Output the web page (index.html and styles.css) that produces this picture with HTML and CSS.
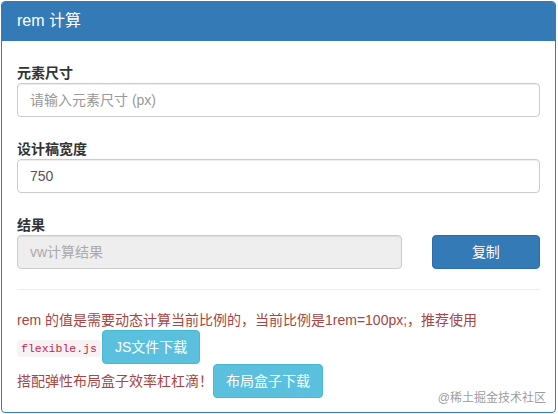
FILE: index.html
```html
<!DOCTYPE html>
<html lang="zh-CN">
<head>
<meta charset="utf-8">
<title>rem 计算</title>
<link rel="stylesheet" href="styles.css">
</head>
<body>
<div class="panel">
  <div class="panel-heading">
    <h3 class="panel-title">rem 计算</h3>
  </div>
  <div class="panel-body">
    <div class="form-group">
      <label class="label">元素尺寸</label>
      <input class="form-control" type="text" placeholder="请输入元素尺寸 (px)">
    </div>
    <div class="form-group">
      <label class="label">设计稿宽度</label>
      <input class="form-control" type="text" value="750">
    </div>
    <div class="form-group last">
      <label class="label">结果</label>
      <div class="row">
        <div class="col col-main">
          <input class="form-control" type="text" placeholder="vw计算结果" disabled>
        </div>
        <div class="col col-side">
          <button class="btn btn-primary btn-block" type="button">复制</button>
        </div>
      </div>
    </div>
    <hr class="divider">
    <p class="text-danger">rem 的值是需要动态计算当前比例的，当前比例是1rem=100px;，推荐使用<br><code class="code">flexible.js</code><a class="btn btn-info">JS文件下载</a><br>搭配弹性布局盒子效率杠杠滴！<a class="btn btn-info">布局盒子下载</a></p>
  </div>
</div>
<div class="watermark">@稀土掘金技术社区</div>
</body>
</html>
```

FILE: styles.css
```css
* {
  box-sizing: border-box;
}

html, body {
  margin: 0;
  padding: 0;
  background: #fff;
}

body {
  font-family: "Liberation Sans", Arial, "Noto Sans CJK SC", sans-serif;
  font-size: 14px;
  line-height: 20px;
  color: #333;
  width: 558px;
  height: 414px;
  position: relative;
  overflow: hidden;
}

.panel {
  margin: 1px 2px 0 1px;
  border: 1px solid #337ab7;
  border-radius: 4px;
  background: #fff;
  overflow: hidden;
}

.panel-heading {
  background: #337ab7;
  color: #fff;
  padding: 10px 15px;
  border-bottom: 1px solid #337ab7;
}

.panel-title {
  margin: 0;
  font-size: 16px;
  line-height: 18px;
  font-weight: 400;
}

.panel-body {
  padding: 22px 15px 14px;
}

.form-group {
  margin-bottom: 22px;
}

.form-group.last {
  margin-bottom: 0;
}

.label {
  display: block;
  font-weight: bold;
  line-height: 20px;
  margin: 0;
  color: #333;
}

.form-control {
  display: block;
  width: 100%;
  height: 34px;
  padding: 6px 12px;
  font-family: inherit;
  font-size: 14px;
  line-height: 20px;
  color: #555;
  background: #fff;
  border: 1px solid #ccc;
  border-radius: 4px;
  box-shadow: inset 0 1px 1px rgba(0, 0, 0, 0.075);
  outline: none;
}

.form-control::placeholder {
  color: #999;
}

.form-control:disabled {
  background: #eee;
  cursor: not-allowed;
}

.form-control:disabled::placeholder {
  color: #aaa;
}

.row {
  display: flex;
  margin: 0 -15px;
}

.col {
  padding: 0 15px;
}

.col-main {
  width: 75%;
}

.col-side {
  width: 25%;
}

.btn {
  display: inline-block;
  padding: 6px 12px;
  font-family: inherit;
  font-size: 14px;
  line-height: 20px;
  text-align: center;
  color: #fff;
  border: 1px solid transparent;
  border-radius: 4px;
  white-space: nowrap;
  cursor: pointer;
}

.btn-block {
  display: block;
  width: 100%;
}

.btn-primary {
  background: #337ab7;
  border-color: #2e6da4;
}

.btn-info {
  background: #5bc0de;
  border-color: #46b8da;
}

.divider {
  margin: 20px 0;
  border: 0;
  border-top: 1px solid #eee;
  height: 0;
}

.text-danger {
  margin: 0;
  color: #a94442;
}

.code {
  font-family: "Liberation Mono", "Courier New", monospace;
  font-size: 11.5px;
  padding: 2px 4px;
  margin-right: 1px;
  color: #c7254e;
  background: #f9f2f4;
  border-radius: 4px;
}

.watermark {
  position: absolute;
  right: 12px;
  bottom: 9px;
  font-size: 12px;
  line-height: 14px;
  color: rgba(110, 110, 110, 0.7);
  font-family: "Liberation Sans", "Noto Sans CJK SC", sans-serif;
}
```
